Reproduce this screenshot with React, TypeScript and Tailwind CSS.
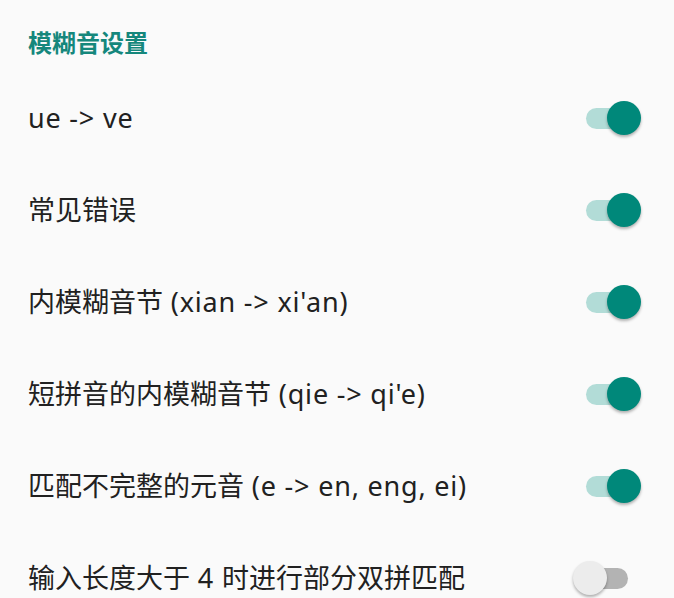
const options = [
  { label: "ue -> ve", on: true },
  { label: "常见错误", on: true },
  { label: "内模糊音节 (xian -> xi'an)", on: true },
  { label: "短拼音的内模糊音节 (qie -> qi'e)", on: true },
  { label: "匹配不完整的元音 (e -> en, eng, ei)", on: true },
  { label: "输入长度大于 4 时进行部分双拼匹配", on: false },
];

// latin runs are set a bit wider than the CJK ones
function Label({ text }: { text: string }) {
  const parts = text.split(/([\x20-\x7e]+)/).filter(Boolean);
  return (
    <span className="text-[27px] leading-[36px]">
      {parts.map((p, i) =>
        /^[\x20-\x7e]+$/.test(p) ? (
          <span key={i} className="tracking-[0.8px]">{p}</span>
        ) : (
          <span key={i}>{p}</span>
        )
      )}
    </span>
  );
}

function Toggle({ on }: { on: boolean }) {
  return (
    <div className="relative w-[42px] h-[21px]">
      <div className={`absolute inset-0 rounded-full ${on ? "bg-[#b2dcd7]" : "bg-[#b3b3b3]"}`} />
      <div
        className={`absolute top-1/2 -translate-y-1/2 w-[34px] h-[34px] rounded-full shadow-[0_2px_3px_rgba(0,0,0,0.3)] ${
          on ? "left-[21px] bg-[#00887a]" : "-left-[13px] bg-[#ececec]"
        }`}
      />
    </div>
  );
}

export default function App() {
  return (
    <div
      className="w-[674px] h-[598px] overflow-hidden bg-[#fafafa] text-[#212121]"
      style={{ fontFamily: "'Noto Sans', 'Noto Sans CJK SC', sans-serif" }}
    >
      <div className="h-[72px] pt-[29px] pl-[28px]">
        <div className="text-[24px] leading-[28px] font-semibold text-[#15877c]">模糊音设置</div>
      </div>
      {options.map((o, i) => (
        <div key={i} className="h-[92px] flex items-center justify-between pl-[28px] pr-[46px]">
          <Label text={o.label} />
          <Toggle on={o.on} />
        </div>
      ))}
    </div>
  );
}
